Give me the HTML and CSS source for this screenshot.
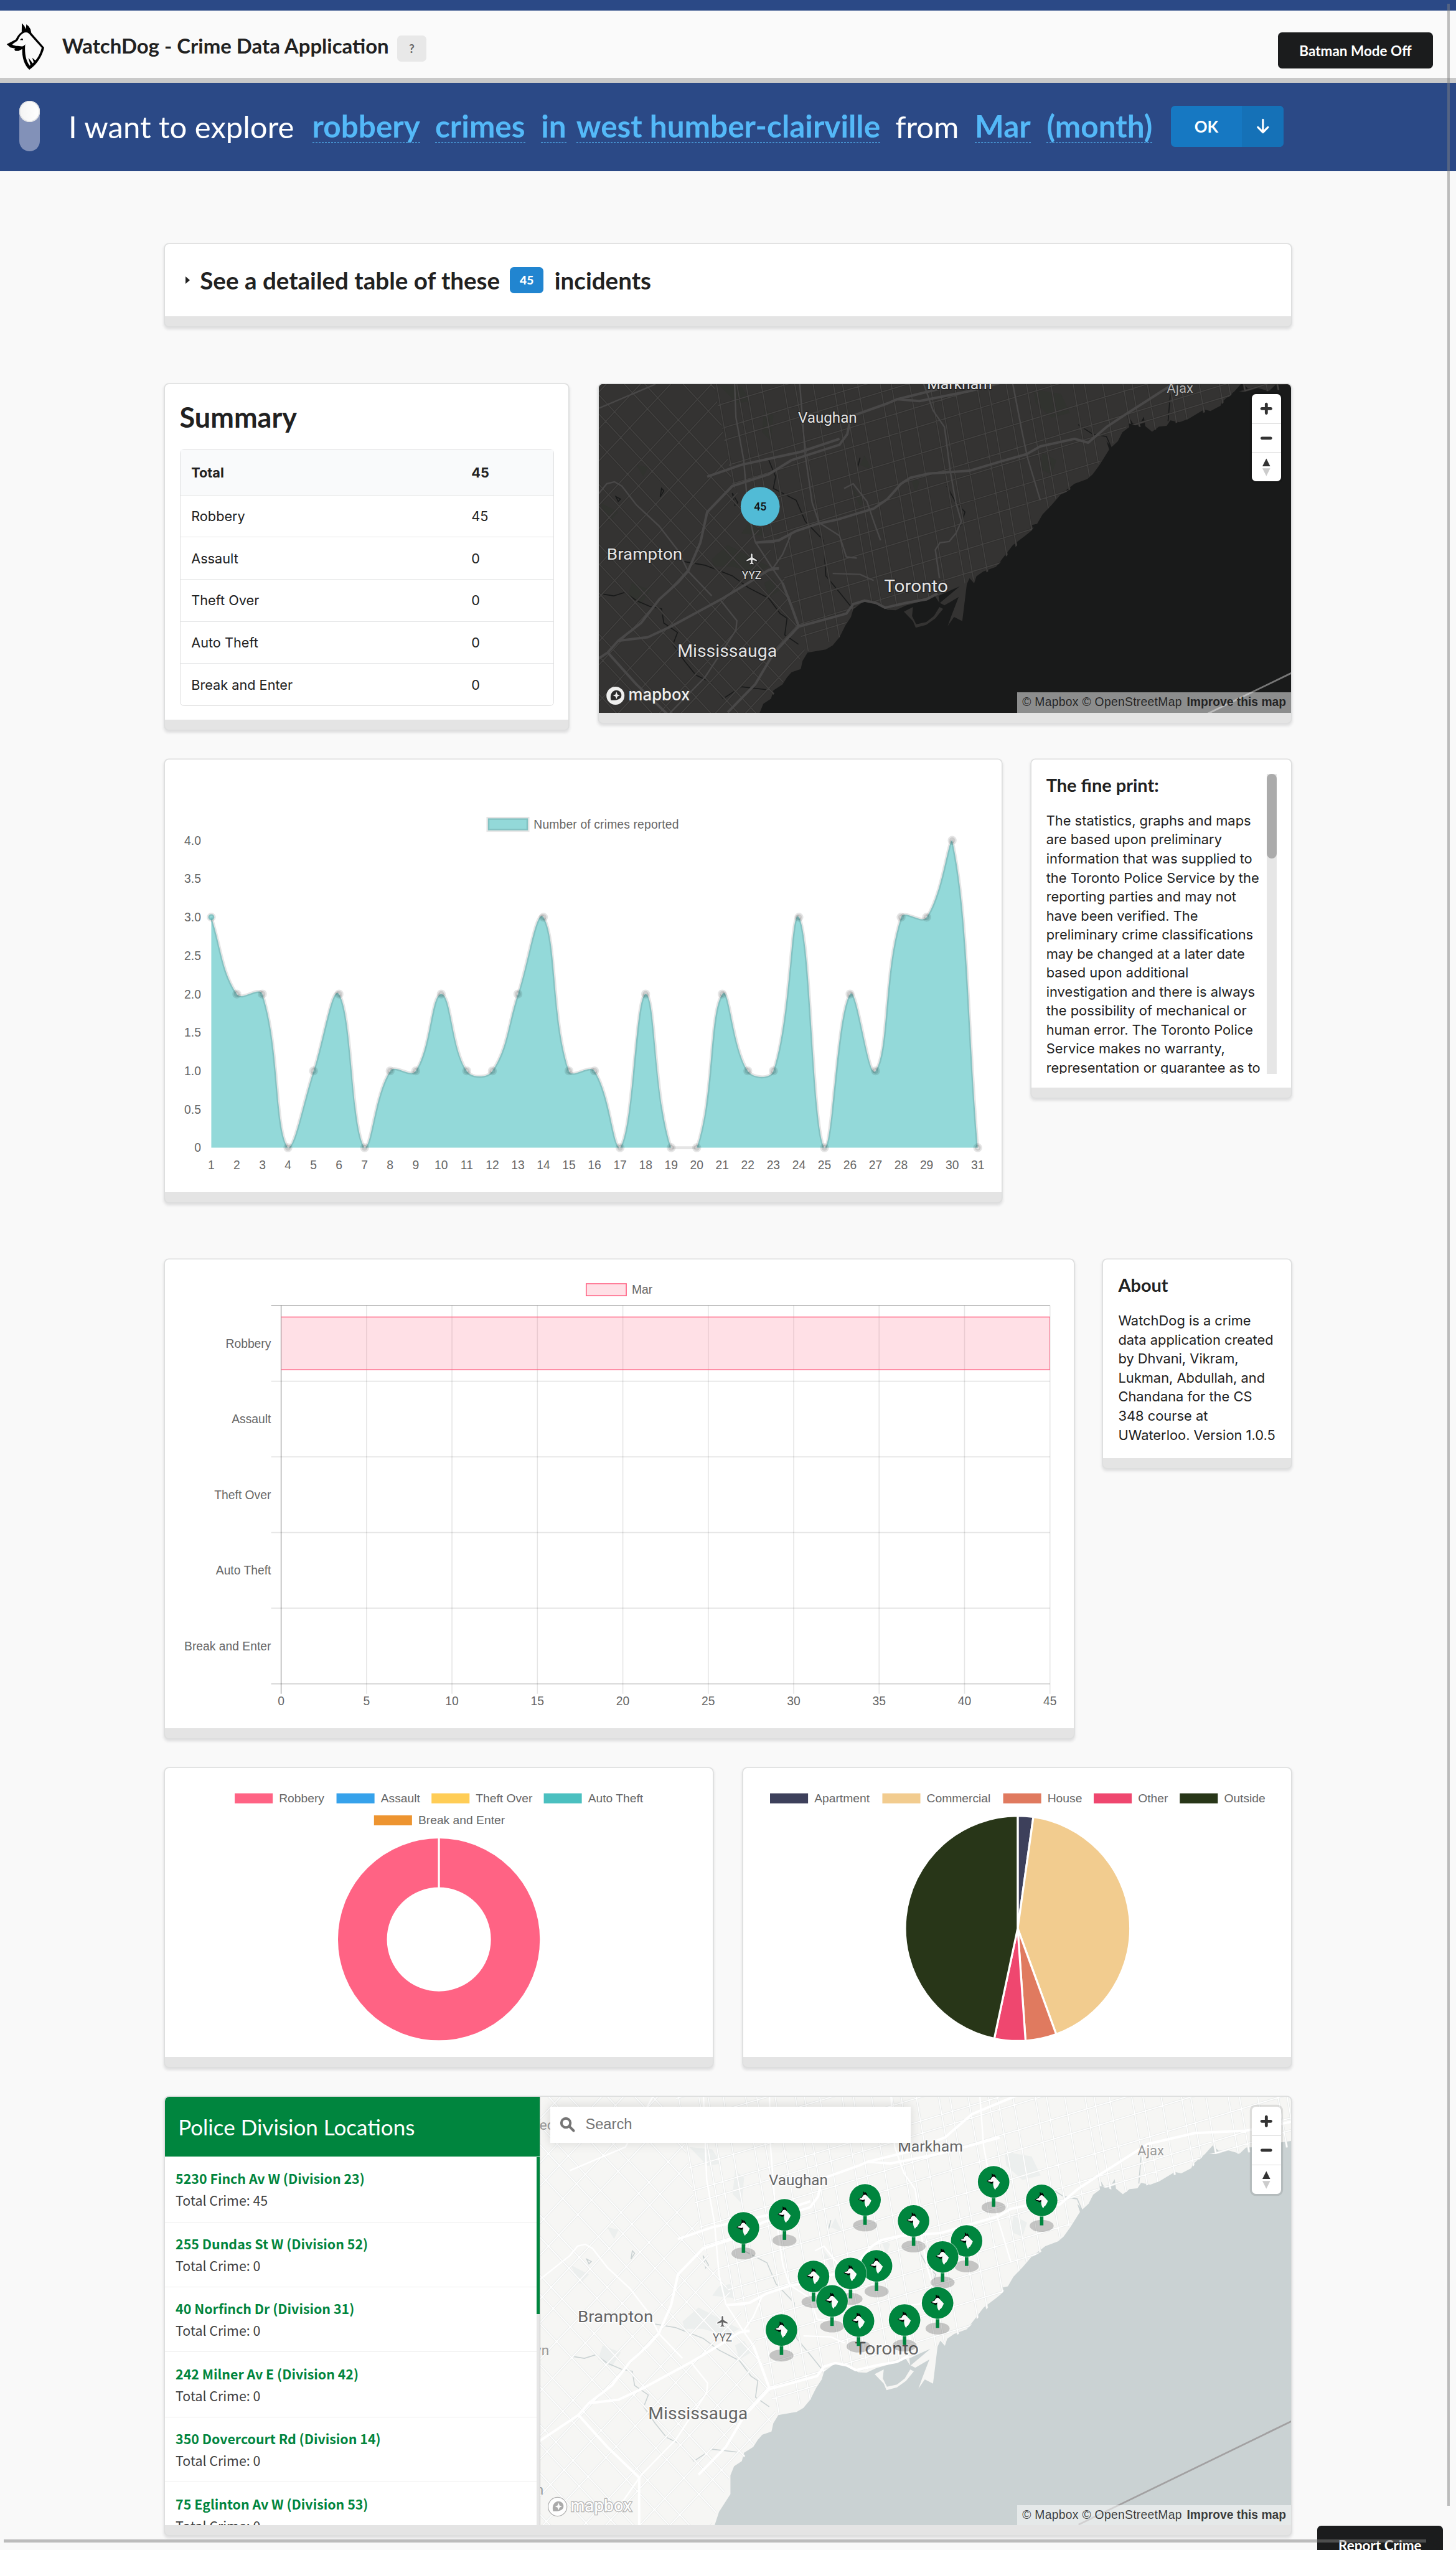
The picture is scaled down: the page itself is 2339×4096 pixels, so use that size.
FILE: index.html
```
<!DOCTYPE html>
<html lang="en">
<head>
<meta charset="utf-8">
<title>WatchDog - Crime Data Application</title>
<link rel="stylesheet" href="styles.css">
</head>
<body>
<svg class="defs" width="0" height="0" aria-hidden="true">
  <defs>
    <symbol id="dog" viewBox="0 0 360 360">
      <path d="M131 53L146 70L155 90L158 60L172 72L183 90L188 112L265 200C256 240 226 300 176 332C146 306 132 260 133 208L112 219H92L86 212L92 205L62 199L40 179L62 168L95 150C102 134 112 118 130 106Z"/>
      <path class="dog-face" d="M138 114Q160 102 174 116L250 201C240 240 222 278 178 308Q144 264 151 179C146 188 138 193 130 192C110 190 88 190 75 183C74 176 85 174 105 158C112 150 112 132 138 114Z"/>
      <path d="M119 154L132 143L138 150V155ZM170 260L186 280L198 298L184 309ZM193 260L214 278L204 292Z"/>
    </symbol>
    <symbol id="dog-pin" viewBox="40 50 230 285">
      <path d="M124 50L146 70L155 90L158 58L185 90L196 120L160 150L150 215L110 225L92 205L62 199L40 179L95 150L108 124L126 104Z"/>
      <path class="dog-face" d="M134 112Q160 98 178 116L258 201C246 248 215 275 214 290L196 292L188 315L176 322Q138 270 149 185L120 196L52 180C62 166 90 164 105 154C110 146 112 128 134 112Z"/>
    </symbol>
    <symbol id="plane" viewBox="0 0 24 24">
      <path d="M21 16v-2l-8-5V3.500c0-.83-.67-1.500-1.500-1.500S10 2.670 10 3.500V9l-8 5v2l8-2.500V19l-2 1.500V22l3.500-1 3.500 1v-1.500L13 19v-5.500l8 2.500z"/>
    </symbol>
    <symbol id="zoom-in" viewBox="0 0 29 29"><path fill="#333" d="M14.500 8.500c-.75 0-1.500.75-1.500 1.500v3h-3c-.75 0-1.500.75-1.500 1.500S9.250 16 10 16h3v3c0 .75.75 1.500 1.500 1.500S16 19.750 16 19v-3h3c.75 0 1.500-.75 1.500-1.500S19.750 13 19 13h-3v-3c0-.75-.75-1.500-1.500-1.500z"/></symbol>
    <symbol id="zoom-out" viewBox="0 0 29 29"><path fill="#333" d="M10 13c-.75 0-1.500.75-1.500 1.500S9.250 16 10 16h9c.75 0 1.500-.75 1.500-1.500S19.750 13 19 13h-9z"/></symbol>
    <symbol id="compass" viewBox="0 0 29 29"><path fill="#333" d="M10.500 14l4-8 4 8z"/><path fill="#ccc" d="M10.500 16l4 8 4-8z"/></symbol>

    <clipPath id="clip-west"><path transform="matrix(.912 0 0 .47194 1180 740)" d="M-120-260H240L310 480L420 850L455 1085L470 1195L370 1450L320 1700H-120Z"/></clipPath>
    <clipPath id="clip-east"><path transform="matrix(.912 0 0 .47194 1180 740)" d="M240-260H1700V34L1486 88L1410 90L1380 150L1310 205L1230 255L1180 225L1140 320L1088 460L1020 540L965 680L888 832L835 890L762 950L655 1010L600 975L575 1010L545 1130L470 1195L455 1085L420 850L310 480Z"/></clipPath>

    <g id="geo">
      <g transform="matrix(.912 0 0 .47194 1180 740)">
        <path class="land" d="M1700-260V20L1600 34L1574 41L1525 60L1500 62L1486 88L1457 72L1440 76L1427 53L1410 90L1392 118L1383 135L1380 150L1358 172L1344 166L1310 205L1290 220L1270 212L1262 235L1245 238L1230 260L1215 236L1212 196L1202 230L1188 225L1175 182L1180 240L1165 262L1155 300L1141 325L1130 300L1136 335L1115 400L1100 440L1088 460L1060 480L1030 525L1010 570L990 610L978 650L967 655L965 680L952 700L925 740L905 790L888 832L860 852L845 872L840 902L830 880L824 905L818 1000L814 1062L796 1044L782 1083L790 1040L806 960L775 995L765 985L808 915L790 930L762 955L764 985L752 950L720 980L690 996L668 1016L650 1014L636 996L600 975L575 1012L570 1045L558 1080L545 1130L530 1165L515 1182L475 1195L464 1230L460 1265L440 1278L430 1300L420 1330L400 1355L395 1390L378 1412L370 1450L370 1530L345 1605L329 1700H-120V-260Z"/>
        <path class="land" d="M686 1022L706 1002L704 1040L713 1075L735 1066L752 1040L764 1002L772 1010L755 1050L735 1078L712 1090L706 1062Z"/>
        <path class="park" d="M265 800L300 740L350 790L390 830L360 860L310 830L270 830ZM575 500L600 560L590 575L578 530ZM330 690L380 700L370 640L345 650ZM380 900L400 880L415 930L390 960ZM280 60L330 70L350 130L320 140ZM380 160L400 190L395 300L375 260ZM970 80L1030 100L1050 180L1010 200L975 140ZM990 350L1020 380L1010 440L985 420ZM600 360L615 420L590 400ZM700 450L720 470L712 520ZM100 400L125 410L115 450ZM20 560L60 600L40 640ZM90 900L130 930L110 990L80 960Z"/>
        <path class="river" d="M18 945L50 955L75 940L100 975L130 1000L155 1010L160 1070L190 1110L180 1160L205 1230L230 1290L262 1320L290 1390L330 1340L385 1352M205 810L250 825L310 870L345 920L390 965L415 1030L430 1050L425 1120L455 1160M390 380L405 450L400 500L450 550L470 640L510 720L515 870L545 940L570 1000M310 520L322 560L316 572ZM1068 230L1100 270L1130 280L1140 325M1270 100L1265 215M780 490L800 560L820 600L810 660M590 370L585 410M155 500L152 535L160 510ZM55 535L65 545L60 555Z"/>
      </g>
      <g clip-path="url(#clip-west)"><path class="casing" data-grid="west"/><path class="street" data-grid="west"/></g>
      <g clip-path="url(#clip-east)"><path class="casing" data-grid="east"/><path class="street" data-grid="east"/></g>
      <g transform="matrix(.912 0 0 .47194 1180 740)">
        <path class="arterial" d="M310-200L318 200L335 380L345 600L360 725L395 830L420 900L455 1085M455-200L458 60L470 360L485 560L500 645L545 700L560 790L583 795M720-200L730 60L750 170L775 240L788 430L800 560L812 640L800 690L785 725L765 730L755 760L764 880M915-200L925 60L945 260L957 370L985 550M-60 640L18 520L35 480L52 472L68 490L100 570L150 660L190 760L213 850L265 955M555 500L575 480L605 555L620 640L635 720M285 975L320 1060L318 1100L250 1300L175 1448L120 1600M440 690L420 780L400 835M360 730L400 728L440 690M530 860L590 864L620 890M213 -200L140 60L18 160"/>
        <path class="highway" d="M-60 1600L-60 1320L37 1195L60 1145L125 1130L175 1085L285 970L345 900L390 845L412 838M360 730L412 720L450 680L500 648L540 632L620 585L650 545L680 480L700 455L740 437L830 425L900 385L955 355L985 322L1060 290L1090 306L1130 240L1173 185L1250 90L1285 47L1388 1L1500-9L1600-47L1700-70M37 1195L60 1145L110 1070L150 970L190 900L213 850L240 730L255 600L310 490L390 440L440 380L545 315L562 270L570 195L650 140L672 122L760 80L840 20L900-80L1000-160M255 450L330 400L460 345L545 290M672 122L720 130L830 88L960 20M37 1195L100 1330L170 1460L170 1700M300 1448L360 1330L400 1200L455 1085L560 1030L575 990L600 975L625 985L645 1005L690 985L735 970L760 945M395 838L412 840M455 1080L440 1000L420 900"/>
        <path class="border" d="M1133 1659L1600 1221L1700 1127"/>
      </g>
    </g>
    <g id="places">
      <text x="1852" y="777" font-size="29" textLength="130" lengthAdjust="spacingAndGlyphs">Markham</text>
      <text x="1594" y="845" font-size="29" textLength="118" lengthAdjust="spacingAndGlyphs">Vaughan</text>
      <text x="1212" y="1118" font-size="31" textLength="151" lengthAdjust="spacingAndGlyphs">Brampton</text>
      <text x="1766" y="1183" font-size="35" textLength="128" lengthAdjust="spacingAndGlyphs">Toronto</text>
      <text x="1353" y="1312" font-size="35" textLength="199" lengthAdjust="spacingAndGlyphs">Mississauga</text>
      <text x="1482" y="1157" font-size="22" textLength="39" lengthAdjust="spacingAndGlyphs">YYZ</text>
      <text class="minor" x="2331" y="785" font-size="28" textLength="53" lengthAdjust="spacingAndGlyphs">Ajax</text>
      <use href="#plane" x="1489" y="1104" width="26" height="26"/>
    </g>
    <g id="pin">
      <ellipse cx="0" cy="51" rx="24" ry="12" fill="#000" opacity=".2"/>
      <path d="M0 28V50" stroke="#00853e" stroke-width="7"/>
      <circle r="33" fill="#fff" opacity=".45"/>
      <circle r="31.500" fill="#00853e"/>
      <use href="#dog-pin" x="-14" y="-17" width="28" height="34"/>
    </g>
  </defs>
</svg>

<header class="topbar">
  <svg class="logo" viewBox="0 0 360 360"><use href="#dog"/></svg>
  <h1 class="brand">WatchDog - Crime Data Application</h1>
  <span class="help">?</span>
  <button class="btn-dark mode">Batman Mode Off</button>
</header>

<section class="query">
  <div class="toggle"><span class="knob"></span></div>
  <p class="sentence">
    <span class="lead">I want to explore</span>
    <a class="crime">robbery</a>
    <a class="kind">crimes</a>
    <a class="where">in</a>
    <a class="area">west humber-clairville</a>
    <span class="from">from</span>
    <a class="month">Mar</a>
    <a class="span">(month)</a>
  </p>
  <div class="run">
    <button class="ok">OK</button>
    <button class="down"><svg viewBox="0 0 32 32"><path d="M16 3V28M6 18L16 28L26 18"/></svg></button>
  </div>
</section>

<main>
  <div class="row r1">
    <section class="card details">
      <div class="body"><i class="caret"></i><span>See a detailed table of these</span><b class="count">45</b><span>incidents</span></div>
    </section>
  </div>

  <div class="row r2">
    <section class="card summary">
      <div class="body">
        <h2>Summary</h2>
        <table>
          <tr class="total"><th>Total</th><th>45</th></tr>
          <tr><td>Robbery</td><td>45</td></tr>
          <tr><td>Assault</td><td>0</td></tr>
          <tr><td>Theft Over</td><td>0</td></tr>
          <tr><td>Auto Theft</td><td>0</td></tr>
          <tr><td>Break and Enter</td><td>0</td></tr>
        </table>
      </div>
    </section>
    <section class="card crime-map">
      <div class="map dark">
        <svg class="canvas" viewBox="1196 767.500 1384 656.500">
          <use href="#geo"/><use href="#places"/>
          <circle cx="1518.500" cy="1012" r="39" fill="#51bbd6"/>
          <text class="cluster" x="1518.500" y="1020">45</text>
        </svg>
        <div class="controls"><svg><use href="#zoom-in"/></svg><svg><use href="#zoom-out"/></svg><svg><use href="#compass"/></svg></div>
        <svg class="mapbox" viewBox="0 0 176 46"><circle cx="22" cy="23" r="18"/><path class="drop" d="M13 32C10 20 16 12 24 12C30 12 34 17 34 22C34 30 24 33 13 32Z"/><path class="star" d="M24 15L26 20.500L31 22.500L26 24.500L24 30L22 24.500L17 22.500L22 20.500Z"/><text x="48" y="32" textLength="123" lengthAdjust="spacingAndGlyphs">mapbox</text></svg>
        <div class="credit"><span>© Mapbox © OpenStreetMap</span> <b>Improve this map</b></div>
      </div>
    </section>
  </div>

  <div class="row r3">
    <section class="card daily">
      <svg id="daily" viewBox="330 1517.500 1672 864.500"></svg>
    </section>
    <section class="card fine">
      <div class="scroller">
        <div class="text">
          <h3>The fine print:</h3>
          <p>The statistics, graphs and maps<br>are based upon preliminary<br>information that was supplied to<br>the Toronto Police Service by the<br>reporting parties and may not<br>have been verified. The<br>preliminary crime classifications<br>may be changed at a later date<br>based upon additional<br>investigation and there is always<br>the possibility of mechanical or<br>human error. The Toronto Police<br>Service makes no warranty,<br>representation or guarantee as to</p>
        </div>
        <div class="track"><div class="thumb"></div></div>
      </div>
    </section>
  </div>

  <div class="row r4">
    <section class="card by-type">
      <svg id="by-type" viewBox="330 2517.500 1816 936.500"></svg>
    </section>
    <section class="card about">
      <div class="body">
        <h3>About</h3>
        <p>WatchDog is a crime<br>data application created<br>by Dhvani, Vikram,<br>Lukman, Abdullah, and<br>Chandana for the CS<br>348 course at<br>UWaterloo. Version 1.0.5</p>
      </div>
    </section>
  </div>

  <div class="row r5">
    <section class="card"><svg id="offence-ring" viewBox="330 3533.500 1095.500 576.500"></svg></section>
    <section class="card"><svg id="premise-pie" viewBox="1485.500 3533.500 1095 576.500"></svg></section>
  </div>

  <div class="row r6">
    <section class="card stations">
      <aside>
        <div class="bar">Police Division Locations</div>
        <div class="list">
          <ul>
            <li><b>5230 Finch Av W (Division 23)</b><span>Total Crime: 45</span></li>
            <li><b>255 Dundas St W (Division 52)</b><span>Total Crime: 0</span></li>
            <li><b>40 Norfinch Dr (Division 31)</b><span>Total Crime: 0</span></li>
            <li><b>242 Milner Av E (Division 42)</b><span>Total Crime: 0</span></li>
            <li><b>350 Dovercourt Rd (Division 14)</b><span>Total Crime: 0</span></li>
            <li><b>75 Eglinton Av W (Division 53)</b><span>Total Crime: 0</span></li>
          </ul>
          <div class="track"><div class="thumb"></div></div>
        </div>
      </aside>
      <div class="map light">
        <svg class="canvas" viewBox="1137.500 668 1500.500 856">
          <use href="#geo"/><use href="#places"/>
          <g class="edge-places">
            <text x="1136" y="734" font-size="28">ed</text>
            <text x="1155" y="1184" text-anchor="end" font-size="28">wn</text>
            <text x="1144" y="1463" text-anchor="end" font-size="28">n</text>
          </g>
        </svg>
        <svg class="canvas pins" id="pins" viewBox="0 0 1500.500 856"></svg>
        <div class="search"><svg viewBox="0 0 32 32"><circle cx="12.500" cy="12.500" r="9"/><path d="M19 19L28 28"/></svg><span>Search</span></div>
        <div class="controls"><svg><use href="#zoom-in"/></svg><svg><use href="#zoom-out"/></svg><svg><use href="#compass"/></svg></div>
        <svg class="mapbox" viewBox="0 0 176 46"><circle cx="22" cy="23" r="18"/><path class="drop" d="M13 32C10 20 16 12 24 12C30 12 34 17 34 22C34 30 24 33 13 32Z"/><path class="star" d="M24 15L26 20.500L31 22.500L26 24.500L24 30L22 24.500L17 22.500L22 20.500Z"/><text x="48" y="32" textLength="123" lengthAdjust="spacingAndGlyphs">mapbox</text></svg>
        <div class="credit"><span>© Mapbox © OpenStreetMap</span> <b>Improve this map</b></div>
      </div>
    </section>
  </div>
</main>

<button class="btn-dark report">Report Crime</button>
<div class="page-scroll-y"></div>
<div class="page-scroll-x"></div>
<script src="script.js"></script>
</body>
</html>
```
FILE: styles.css
```
* { box-sizing: border-box; }

html {
  height: 4096px;
  overflow: hidden;
  background: #f9f9f9;
}

/* The page is laid out on a 2910px wide sheet. */
body {
  position: relative;
  width: 2910px;
  height: 5095.500px;
  margin: 0;
  overflow: hidden;
  zoom: 0.80378;
  background: #f9f9f9;
  color: #212121;
  font-family: Inter, "Liberation Sans", sans-serif;
  font-size: 27px;
}

h1, h2, h3, p, ul { margin: 0; padding: 0; }
h1, h2, h3, button { font-family: Lato, sans-serif; font-weight: 700; }
button { border: 0; padding: 0; color: #fff; }
svg { display: block; }
.defs { position: absolute; }

/* Header */
.topbar {
  display: flex;
  align-items: flex-start;
  height: 166px;
  border-top: 22px solid #2b4986;
  border-bottom: 10px solid #c9c9c9;
  background: #fafafa;
}
.logo { width: 120px; height: 120px; margin-top: 8px; }
.dog-face { fill: #fafafa; }
.brand { width: 654px; margin: 45px 0 0 4px; font-size: 41px; line-height: 52px; white-space: nowrap; }
.help {
  width: 58px;
  margin: 50px 0 0 16px;
  border-radius: 8px;
  background: #e8e8e8;
  color: #666;
  font: 700 24px/52px Lato, sans-serif;
  text-align: center;
}
.btn-dark { border-radius: 8px; background: #1b1c1d; font-size: 28px; }
.mode { width: 310px; height: 72px; margin: 44px 46px 0 auto; }

/* Query sentence */
.query {
  display: flex;
  align-items: flex-start;
  height: 176px;
  background: #2b4986;
}
.toggle { width: 42px; height: 100px; margin: 36px 0 0 38px; border-radius: 21px; background: #8291b8; }
.knob { display: block; width: 42px; height: 42px; border-radius: 50%; background: linear-gradient(90deg, #f4f4f4, #fff); box-shadow: inset 0 0 0 2px #e0e1e4; }
.sentence {
  display: flex;
  width: 2167px;
  margin: 46px 0 0 57px;
  color: #fff;
  font: 400 61px/84px Lato, sans-serif;
  white-space: nowrap;
}
.sentence a { height: 73px; border-bottom: 2px dashed #54b9f8; color: #54b9f8; font-size: 61.600px; font-weight: 700; line-height: 80px; }
.lead { width: 455px; }
.crime { margin-left: 32px; }
.kind { margin-left: 30px; }
.where { margin-left: 32px; }
.area { margin-left: 20px; }
.from { margin-left: 30px; }
.month { margin-left: 32px; }
.span { margin-left: 32px; }
.run { display: flex; height: 82px; margin: 46px 0 0 36px; border-radius: 8px; overflow: hidden; background: #1678c2; }
.ok { width: 142px; background: none; font-size: 32px; }
.down { display: grid; place-items: center; width: 84px; background: #1571b7; }
.down svg { width: 32px; height: 32px; fill: none; stroke: #fff; stroke-width: 4; stroke-linecap: round; stroke-linejoin: round; }

/* Cards */
main { width: 2250.500px; margin-left: 330px; padding-top: 146px; }
.row { display: flex; align-items: flex-start; justify-content: space-between; }
.card {
  border-bottom: 20px solid #e4e4e4;
  border-radius: 8px;
  background: #fff;
  box-shadow: 0 0 0 2px #dddede, 0 4px 5px 2px rgba(34, 36, 38, .12);
}
.r1 { height: 279.500px; }
.r2 { height: 750px; }
.r3 { height: 1000px; }
.r4 { height: 1016px; }
.r5 { height: 656.500px; }

.details { width: 100%; height: 164px; }
.details .body { display: flex; align-items: center; height: 144px; padding-left: 41px; font: 700 48px/60px Lato, sans-serif; white-space: nowrap; }
.caret { margin-right: 20px; border: 8px solid transparent; border-left: 9px solid #212121; border-right: 0; }
.count { width: 67px; margin: 0 22px 0 20px; border-radius: 8px; background: #2185d0; color: #fff; font-size: 24px; line-height: 52px; text-align: center; }

.summary { width: 806px; height: 690.500px; }
.summary .body { padding: 24px 29px 0; }
.summary h2 { margin-bottom: 20px; font-size: 56px; line-height: 86px; }
table { width: 748px; border: 2px solid #dfdfe0; border-spacing: 0; border-radius: 8px; }
td, th { height: 84.200px; padding: 0 22px; border-top: 2px solid #e4e5e6; text-align: left; }
td:first-child, th:first-child { width: 560px; }
.total th { height: 90px; border-top: 0; background: #f9fafb; }

/* Maps */
.map { position: relative; overflow: hidden; }
.dark {
  --land: #343332; --park: #31332f; --water: #191a1a; --road: #434241; --casing: #302f2e; --major: #494848;
  --label: #e4e4e4; --halo: #222; --minor: #b4b4b4; --line: #777;
  height: 656.500px; border-radius: 8px 8px 0 0; background: #191a1a;
}
.light {
  --land: #f6f6f4; --park: #ecefee; --water: #cad2d3; --road: #fff; --casing: #eaeceb; --major: #fff;
  --label: #656565; --halo: #fff; --minor: #999; --line: #a2a0a1;
  flex: 1; height: 856px; border-radius: 0 8px 0 0; background: #cad2d3;
}
.crime-map { width: 1384px; }
.canvas { position: absolute; inset: 0; width: 100%; height: 100%; }
.land { fill: var(--land); }
.park { fill: var(--park); }
.river { fill: none; stroke: var(--water); stroke-width: 2; vector-effect: non-scaling-stroke; }
.casing { fill: none; stroke: var(--casing); stroke-width: 4.500; }
.street { fill: none; stroke: var(--road); stroke-width: 2; }
.arterial, .highway { fill: none; stroke: var(--major); stroke-width: 3; stroke-linejoin: round; vector-effect: non-scaling-stroke; }
.highway { stroke-width: 5; }
.border { stroke: var(--line); stroke-width: 3.500; vector-effect: non-scaling-stroke; }
#places { fill: var(--label); stroke: var(--halo); stroke-width: 3; paint-order: stroke; font-family: Roboto, sans-serif; }
#places .minor { fill: var(--minor); stroke-width: 2; }
.edge-places { fill: #999; font-family: Roboto, sans-serif; }
.cluster { fill: #111; font: 500 22px Roboto, sans-serif; text-anchor: middle; }
.controls {
  position: absolute;
  top: 20px;
  right: 20px;
  width: 58px;
  border-radius: 8px;
  background: #fff;
  box-shadow: 0 0 0 4px rgba(0, 0, 0, .1);
}
.controls svg { width: 58px; height: 58px; }
.controls svg + svg { border-top: 2px solid #ddd; }
.mapbox { position: absolute; left: 12px; bottom: 11px; width: 176px; height: 46px; overflow: visible; fill: #fff; opacity: .92; }
.mapbox text { font: 500 33px Inter, sans-serif; }
.mapbox .drop { fill: #2a2a2a; }
.light .mapbox { bottom: 13px; stroke: #a9a9a9; stroke-width: 3; paint-order: stroke; }
.light .mapbox .drop { fill: #a4a4a4; stroke: none; }
.light .mapbox .star { stroke: none; }
.credit {
  position: absolute;
  right: 0;
  bottom: 0;
  height: 40px;
  padding: 0 10px;
  background: rgba(255, 255, 255, .5);
  color: rgba(0, 0, 0, .75);
  font: 24px/40px "Liberation Sans", sans-serif;
  white-space: nowrap;
}
.credit span { letter-spacing: .38px; }
.credit b { margin-left: 3px; }

/* Charts */
.daily { width: 1672px; }
.by-type { width: 1816px; }
.card > svg { width: 100%; }
#daily, #by-type, #offence-ring, #premise-pie { font: 24px "Liberation Sans", sans-serif; }
.lbl { fill: #666; }
.mid { text-anchor: middle; }
.end { text-anchor: end; }
.r5 .card { width: 1095px; height: 596.500px; }

/* Text panels */
h3 { font-size: 36px; line-height: 46px; }
.fine { width: 518.500px; height: 676.500px; }
.scroller { display: flex; justify-content: space-between; height: 600px; margin: 28.500px 29px 0; overflow: hidden; }
.fine p, .about p { margin-top: 29px; font-size: 27.200px; line-height: 38px; white-space: nowrap; }
.track { background: #e6e6e6; }
.scroller .track { width: 20px; height: 600px; }
.scroller .thumb { height: 170px; border-radius: 10px; background: #ababab; }
.about { width: 375.500px; height: 416.500px; }
.about .body { padding: 28px 30px 0; }

/* Stations */
.stations { display: flex; width: 100%; height: 876px; overflow: hidden; }
aside { width: 750px; height: 856px; border-right: 2px solid #c2c2c2; }
.bar { height: 120px; padding-left: 26px; border-radius: 8px 0 0 0; background: #00853e; color: #fff; font: 400 43.600px/120px Lato, sans-serif; }
.list { display: flex; height: 736px; padding-top: 1px; overflow: hidden; }
.list ul { flex: 1; list-style: none; font: 26.600px/44px "Noto Sans CJK SC", sans-serif; }
.list li { height: 130px; padding: 20px 0 0 21px; border-bottom: 2px solid #eee; white-space: nowrap; }
.list b { display: block; color: #00853e; }
.list li > span { color: #404040; }
.list .track { width: 6px; height: 736px; }
.list .thumb { height: 314px; background: #00853e; }
.search {
  position: absolute;
  top: 20px;
  left: 20px;
  display: flex;
  align-items: center;
  width: 720px;
  height: 72px;
  padding-left: 19px;
  background: #fff;
  box-shadow: 0 0 20px 4px rgba(0, 0, 0, .1);
  color: #757575;
  font: 29.500px "Liberation Sans", sans-serif;
}
.search svg { width: 32px; height: 32px; margin-right: 19px; fill: none; stroke: #757575; stroke-width: 5; stroke-linecap: round; }

/* Overlays */
.report { position: absolute; left: 2632px; bottom: 0; width: 252px; height: 48.500px; padding-top: 23px; border-radius: 8px 8px 0 0; line-height: 34px; overflow: hidden; }
.page-scroll-y { position: absolute; left: 2892px; top: 8px; width: 6px; height: 4999px; background: rgba(128, 128, 128, .5); }
.page-scroll-x { position: absolute; left: 8px; top: 5075px; width: 2842px; height: 6px; background: rgba(128, 128, 128, .5); }
```
FILE: script.js
```
const NS = 'http://www.w3.org/2000/svg';
function add(parent, tag, attrs, text) {
  const el = document.createElementNS(NS, tag);
  for (const k in attrs) el.setAttribute(k, attrs[k]);
  if (text !== undefined) el.textContent = text;
  parent.appendChild(el);
  return el;
}

// Incidents per day, drawn as a smoothed area.
(function () {
  const svg = document.getElementById('daily');
  const data = [3, 2, 2, 0, 1, 2, 0, 1, 1, 2, 1, 1, 2, 3, 1, 1, 0, 2, 0, 0, 2, 1, 1, 3, 0, 2, 1, 3, 3, 4, 0];
  const x0 = 422.6, dx = 51.063, top = 1679, base = 2293.3;
  const pts = data.map((v, i) => [x0 + dx * i, base - (base - top) * v / 4]);
  const clampY = y => Math.max(top, Math.min(base, y));
  const clampX = x => Math.max(x0, Math.min(x0 + dx * 30, x));
  const ctrl = pts.map((p, i) => {
    const a = pts[i - 1] || p, b = pts[i + 1] || p;
    const d1 = Math.hypot(p[0] - a[0], p[1] - a[1]), d2 = Math.hypot(b[0] - p[0], b[1] - p[1]);
    const s = 0.4 / (d1 + d2);
    return [
      [clampX(p[0] - d1 * s * (b[0] - a[0])), clampY(p[1] - d1 * s * (b[1] - a[1]))],
      [clampX(p[0] + d2 * s * (b[0] - a[0])), clampY(p[1] + d2 * s * (b[1] - a[1]))]
    ];
  });
  let d = 'M' + pts[0];
  for (let i = 1; i < pts.length; i++) d += 'C' + ctrl[i - 1][1] + ' ' + ctrl[i][0] + ' ' + pts[i];
  add(svg, 'path', { d: d + 'V' + base + 'H' + x0 + 'Z', fill: '#93d9d9' });
  add(svg, 'path', { d, fill: 'none', stroke: '#000', 'stroke-opacity': .1, 'stroke-width': 6 });
  pts.forEach((p, i) => add(svg, 'circle', {
    cx: p[0], cy: p[1], r: 6, fill: i ? 'rgba(0,0,0,.1)' : 'rgba(75,192,192,.6)', stroke: '#000', 'stroke-opacity': .1, 'stroke-width': 6
  }));
  pts.forEach((p, i) => add(svg, 'text', { class: 'lbl mid', x: p[0], y: 2336 }, i + 1));
  for (let i = 0; i <= 8; i++) {
    add(svg, 'text', { class: 'lbl end', x: 402, y: base + 8.5 - i * (base - top) / 8 }, i ? (i / 2).toFixed(1) : '0');
  }
  add(svg, 'rect', { x: 975.5, y: 1635, width: 80, height: 24, fill: '#93d9d9', stroke: '#000', 'stroke-opacity': .1, 'stroke-width': 6 });
  add(svg, 'text', { class: 'lbl', x: 1067, y: 1655.5, textLength: 290 }, 'Number of crimes reported');
})();

// Incidents by type.
(function () {
  const svg = document.getElementById('by-type');
  const L = 562.2, R = 2098.8, T = 2609.7, B = 3365.6, sx = (R - L) / 9, sy = (B - T) / 5;
  for (let i = 0; i <= 9; i++) {
    add(svg, 'path', { d: `M${L + sx * i} ${T}V${B + 20}`, stroke: '#000', 'stroke-width': 2, 'stroke-opacity': i ? .1 : .3 });
    add(svg, 'text', { class: 'lbl mid', x: L + sx * i, y: 3408 }, i * 5);
  }
  for (let i = 0; i <= 5; i++) {
    add(svg, 'path', { d: `M${L - 20} ${T + sy * i}H${R}`, stroke: '#000', 'stroke-width': 2, 'stroke-opacity': [.27, .1, .1, .1, .1, .2][i] });
  }
  ['Robbery', 'Assault', 'Theft Over', 'Auto Theft', 'Break and Enter'].forEach((t, i) =>
    add(svg, 'text', { class: 'lbl end', x: 542, y: T + sy * (i + .5) + 8.5 }, t));
  add(svg, 'path', { d: `M${L} 2632.500H${R}V2738H${L}Z`, fill: 'rgba(255,99,132,.2)' });
  add(svg, 'path', { d: `M${R - 1} 2632.500V2738`, stroke: '#ff6384', 'stroke-opacity': .5, 'stroke-width': 2 });
  add(svg, 'path', { d: `M${L} 2632.500H${R}M${L} 2738H${R}`, stroke: '#ff6384', 'stroke-width': 2 });
  add(svg, 'rect', { x: 1172, y: 2566, width: 80, height: 24, fill: '#ffe0e6', stroke: '#ff6384', 'stroke-width': 2 });
  add(svg, 'text', { class: 'lbl', x: 1263, y: 2586.5 }, 'Mar');
})();

function legend(svg, items) {
  items.forEach(([x, y, color, name]) => {
    add(svg, 'rect', { x, y, width: 76, height: 20, fill: color });
    add(svg, 'text', { class: 'lbl', x: x + 88.5, y: y + 18 }, name);
  });
}

(function () {
  const svg = document.getElementById('offence-ring');
  legend(svg, [
    [469.5, 3584, '#ff6384', 'Robbery'], [673, 3584, '#36a2eb', 'Assault'], [863, 3584, '#ffcd56', 'Theft Over'],
    [1087.5, 3584, '#4bc0c0', 'Auto Theft'], [748, 3628, '#ed9430', 'Break and Enter']
  ]);
  add(svg, 'circle', { cx: 877.8, cy: 3876, r: 152.9, fill: 'none', stroke: '#ff6384', 'stroke-width': 97.8 });
  add(svg, 'path', { d: 'M877.8 3672V3774', stroke: '#fff', 'stroke-width': 4 });
})();

(function () {
  const svg = document.getElementById('premise-pie');
  legend(svg, [
    [1539, 3584, '#3d405b', 'Apartment'], [1763.5, 3584, '#f2cc8f', 'Commercial'], [2005, 3584, '#e07a5f', 'House'],
    [2186, 3584, '#ef476f', 'Other'], [2358, 3584, '#283618', 'Outside']
  ]);
  const cx = 2034, cy = 3854, r = 225;
  let at = 0;
  [[1, '#3d405b'], [19, '#f2cc8f'], [2, '#e07a5f'], [2, '#ef476f'], [21, '#283618']].forEach(([n, fill]) => {
    const a = at / 45 * 2 * Math.PI, b = (at + n) / 45 * 2 * Math.PI;
    at += n;
    add(svg, 'path', {
      d: `M${cx} ${cy}L${cx + r * Math.sin(a)} ${cy - r * Math.cos(a)}A${r} ${r} 0 0 1 ${cx + r * Math.sin(b)} ${cy - r * Math.cos(b)}Z`,
      fill, stroke: '#fff', 'stroke-width': 4, 'stroke-linejoin': 'bevel'
    });
  });
})();

// Local street grids: families of parallel lines at an angle, unevenly spaced.
function family(cx, cy, angle, gaps, reach) {
  const t = angle * Math.PI / 180, ux = Math.cos(t), uy = Math.sin(t);
  let d = '', off = -reach, i = 0;
  while (off < reach) {
    const px = cx - uy * off, py = cy + ux * off;
    d += `M${(px - ux * reach).toFixed(1)} ${(py - uy * reach).toFixed(1)}L${(px + ux * reach).toFixed(1)} ${(py + uy * reach).toFixed(1)}`;
    off += gaps[i++ % gaps.length];
  }
  return d;
}
const grids = {
  west: family(1300, 1100, 47, [52, 26, 40, 56, 30], 800) + family(1300, 1100, -47, [44, 60, 32, 50], 800),
  east: family(1900, 950, -17, [46, 24, 50, 38, 52], 900) + family(1900, 950, 80, [36, 22, 44, 30, 18, 40], 900)
};
document.querySelectorAll('[data-grid]').forEach(p => p.setAttribute('d', grids[p.dataset.grid]));

// Station pins, later ones on top.
[[906, 170], [1002, 207], [649, 206], [746, 248], [488, 236], [406, 262], [852, 288], [804, 320], [672, 338],
 [620, 353], [546, 359], [583, 408], [794, 412], [636, 448], [728, 446], [482, 466]].forEach(([x, y]) =>
  add(document.getElementById('pins'), 'use', { href: '#pin', x, y }));
```
